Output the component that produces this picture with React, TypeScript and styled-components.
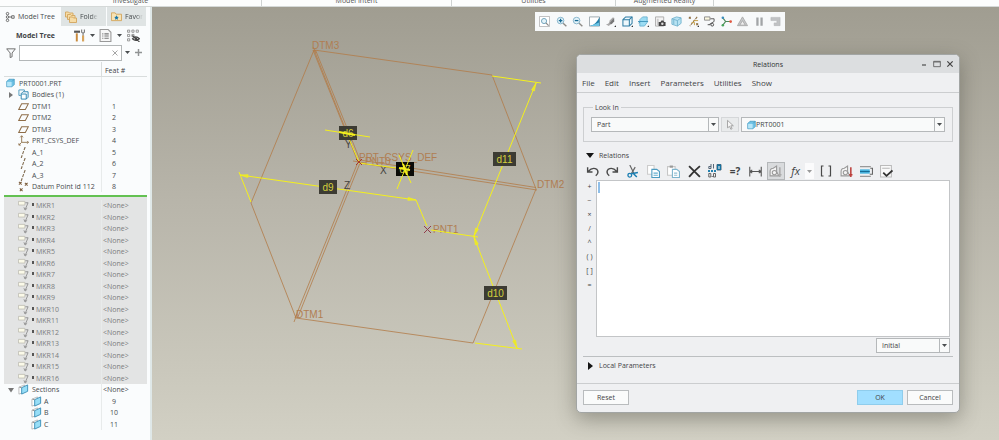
import React from "react";
import styled, { createGlobalStyle, css } from "styled-components";

const GlobalStyle = createGlobalStyle`
  * { box-sizing: border-box; }
  body { margin: 0; overflow: hidden; }
  body, button, select, input, textarea, table {
    font-family: "Open Sans", "Noto Sans", sans-serif;
    font-size: 7px;
    line-height: 11px;
    color: #3f4345;
  }
  button { padding: 0; margin: 0; border: 0; background: none; }
`;

/* ---------- shell ---------- */

const Page = styled.div`
  display: flex;
  flex-direction: column;
  height: 100vh;
  background: #fafcfd;
`;

const Ribbon = styled.header`
  display: grid;
  grid-template-columns: 262px 190px 164px 98px 1fr;
  height: 7px;
  flex: none;
  overflow: hidden;
  background: #fcfdfd;
  border-bottom: 1px solid #d5d9d8;
`;

const RibbonGroup = styled.div`
  display: flex;
  justify-content: center;
  align-items: flex-end;
  height: 6px;
  line-height: 10px;
  color: #555;
  border-right: 1px solid #cfd3d3;
  &:last-child { border-right: 0; }
`;

const Main = styled.main`
  display: flex;
  flex: 1;
  min-height: 0;
`;

const Svg = styled.svg`
  display: block;
  flex: none;
  fill: none;
`;

/* ---------- model tree ---------- */

const Sidebar = styled.aside`
  flex: none;
  width: 152px;
  padding-right: 4px;
  background: #fafcfd;
  border-right: 2px solid #dfe8e8;
`;

const Tabs = styled.div`
  display: flex;
  gap: 1px;
  height: 19px;
`;

const Tab = styled.button<{ $active?: boolean; $width: number }>`
  display: flex;
  align-items: center;
  gap: 3px;
  width: ${(p) => p.$width}px;
  padding-left: ${(p) => (p.$active ? 5 : 4)}px;
  overflow: hidden;
  white-space: nowrap;
  color: #454a4c;
  background: ${(p) => (p.$active ? "#fafcfd" : "#dfe4e4")};
`;

const TabText = styled.span<{ $faded?: boolean }>`
  ${(p) =>
    p.$faded &&
    css`
      mask-image: linear-gradient(90deg, #000 60%, transparent);
    `}
`;

const TreeBar = styled.div`
  display: flex;
  align-items: center;
  height: 18px;
  padding: 0 2px 0 16px;
`;

const TreeTitle = styled.h1`
  flex: 1;
  margin: 0;
  font-size: 7px;
  font-weight: 700;
`;

const BarButton = styled.button<{ $width: number }>`
  display: flex;
  justify-content: center;
  align-items: center;
  width: ${(p) => p.$width}px;
  height: 16px;
`;

const SearchRow = styled.div`
  display: flex;
  align-items: center;
  height: 17px;
  padding: 0 2px 0 6px;
`;

const SearchBox = styled.div`
  display: flex;
  align-items: center;
  flex: 1;
  height: 16px;
  margin-left: 3px;
  padding-right: 3px;
  background: #fff;
  border: 1px solid #b3b7b8;
`;

const SearchInput = styled.input`
  flex: 1;
  min-width: 0;
  border: 0;
  outline: 0;
  background: transparent;
`;

const Tree = styled.table`
  width: calc(100% - 3px);
  margin-left: 4px;
  margin-top: 1px;
  border-spacing: 0;
  table-layout: fixed;
`;

const Head = styled.th<{ $feat?: boolean }>`
  width: ${(p) => (p.$feat ? "46px" : "auto")};
  height: 15px;
  padding: 3px 0 0 3px;
  text-align: left;
  font-weight: 400;
  border-bottom: 1px solid #d9dddd;
  border-left: ${(p) => (p.$feat ? "1px solid #d9dddd" : "0")};
`;

const Row = styled.tr<{ $tall?: boolean; $muted?: boolean }>`
  height: ${(p) => (p.$tall ? 12 : 11)}px;
  color: ${(p) => (p.$muted ? "#7b7d7e" : "#474b4d")};
  background: ${(p) => (p.$muted ? "#e3e4e4" : "transparent")};
`;

const NameCell = styled.td`
  padding: 0;
`;

const NameLine = styled.div<{ $level: number }>`
  display: flex;
  align-items: center;
  height: 11px;
  white-space: nowrap;
  padding-left: ${(p) => [2, 14, 27][p.$level]}px;
`;

const IconSlot = styled.span<{ $wide?: boolean }>`
  display: flex;
  width: ${(p) => (p.$wide ? 14 : 13)}px;
`;

const Twisty = styled.button`
  width: 10px;
  margin-left: -10px;
`;

const Mark = styled.i`
  width: 2px;
  height: 3px;
  margin: 0 2px 2px 0;
  background: #555;
`;

const FeatCell = styled.td`
  padding: 0 0 0 1px;
  border-left: 1px solid #e8ebeb;
`;

const FeatNumber = styled.span`
  display: block;
  width: 22px;
  text-align: center;
`;

const InsertCell = styled.td`
  height: 8px;
  padding: 0;
  border-top: 3px solid #fafcfd;
  background: linear-gradient(#63c152 2px, #e3e4e4 2px);
`;

/* ---------- graphics area ---------- */

const Viewport = styled.section`
  position: relative;
  flex: 1;
  min-width: 0;
  overflow: hidden;
  background: linear-gradient(#a09d91, #b8b5aa 45%, #c9c7bb 82%, #d2d0c4);
`;

const ViewBar = styled.div`
  position: absolute;
  left: 383px;
  top: 5px;
  display: flex;
  justify-content: space-between;
  width: 250px;
  height: 19px;
  padding: 0 2px;
  background: #f7f9fa;
`;

const ViewButton = styled.button`
  display: flex;
  align-items: center;
  justify-content: center;
  width: 15px;
`;

/* ---------- dialog ---------- */

const Dialog = styled.div`
  position: absolute;
  left: 424px;
  right: 39px;
  top: 47px;
  background: #eff0f2;
  border: 1px solid #a2a5a4;
  border-radius: 5px;
  box-shadow: 0 6px 20px rgba(60, 60, 50, 0.4);
`;

const TitleBar = styled.div`
  display: grid;
  grid-template-columns: 1fr auto 1fr;
  align-items: center;
  height: 18px;
  padding: 0 3px;
  background: #dcdee0;
  border-radius: 4px 4px 0 0;
`;

const DialogTitle = styled.h2`
  grid-column: 2;
  margin: 0;
  font-size: 7px;
  font-weight: 400;
  color: #2f3233;
`;

const WindowButtons = styled.div`
  display: flex;
  justify-content: flex-end;
  gap: 3px;
`;

const WindowButton = styled.button`
  width: 10px;
`;

const MenuBar = styled.nav`
  display: flex;
  align-items: center;
  gap: 10px;
  height: 20px;
  padding-left: 5px;
  border-bottom: 1px solid #cbcdcf;
`;

const MenuItem = styled.button`
  font-size: 8px;
`;

const Body = styled.div`
  padding: 9px 6px 0;
`;

const Group = styled.fieldset`
  display: flex;
  gap: 2px;
  min-width: 0;
  margin: 0;
  padding: 4px 7px 9px;
  border: 1px solid #cdcfd1;
`;

const Legend = styled.legend`
  margin-left: 2px;
  padding: 0 2px;
`;

const SelectBox = styled.label<{ $width?: number }>`
  display: flex;
  align-items: center;
  flex: ${(p) => (p.$width ? "none" : 1)};
  width: ${(p) => (p.$width ? `${p.$width}px` : "auto")};
  height: 15px;
  padding-left: 5px;
  background: #f9fafa;
  border: 1px solid #b5b8ba;
`;

const Select = styled.select`
  appearance: none;
  flex: 1;
  min-width: 0;
  height: 13px;
  padding: 0;
  border: 0;
  outline: 0;
  background: transparent;
`;

const SelectArrow = styled.span`
  display: flex;
  align-items: center;
  justify-content: center;
  width: 10px;
  height: 13px;
  border-left: 1px solid #b5b8ba;
`;

const PickButton = styled.button`
  display: flex;
  align-items: center;
  justify-content: center;
  width: 18px;
  height: 15px;
  border: 1px solid #d5d7d9;
  background: #e9ebec;
`;

const SectionToggle = styled.button`
  display: flex;
  align-items: center;
  gap: 5px;
  height: 11px;
  padding-left: 3px;
`;

const RelationsHead = styled.div`
  padding-top: 8px;
`;

const EditBar = styled.div`
  display: flex;
  justify-content: space-between;
  height: 18px;
  margin: 1px 57px 0 0;
`;

const EditButton = styled.button<{ $on?: boolean; $wide?: boolean }>`
  display: flex;
  align-items: center;
  justify-content: ${(p) => (p.$wide ? "space-between" : "center")};
  width: ${(p) => (p.$wide ? 27 : 18)}px;
  height: 18px;
  padding-left: ${(p) => (p.$wide ? 4 : 0)}px;
  background: ${(p) => (p.$on ? "#d9dbdd" : "none")};
  border: ${(p) => (p.$on ? "1px solid #b4b7b9" : "0")};
`;

const DropPart = styled.span`
  display: flex;
  align-items: center;
  justify-content: center;
  width: 9px;
  height: 16px;
  background: #fbfbfc;
`;

const EditorRow = styled.div`
  display: flex;
  margin-right: 3px;
`;

const Operators = styled.div`
  display: flex;
  flex-direction: column;
  width: 13px;
`;

const Operator = styled.button`
  height: 14px;
  line-height: 12px;
  text-align: center;
  white-space: nowrap;
`;

const Editor = styled.div`
  position: relative;
  flex: 1;
  height: 157px;
  border: 1px solid #c3c5c7;
  background: #fff;
`;

const EditorText = styled.textarea`
  display: block;
  width: 100%;
  height: 100%;
  padding: 2px;
  border: 0;
  outline: 0;
  resize: none;
`;

const Caret = styled.span`
  position: absolute;
  left: 1px;
  top: 1px;
  width: 2px;
  height: 11px;
  background: #8fbfe9;
`;

const OrderRow = styled.div`
  display: flex;
  justify-content: flex-end;
  margin: 1px 3px 0 0;
  padding-bottom: 3px;
`;

const LocalSection = styled.div`
  height: 27px;
  padding-top: 3px;
  border-top: 1px solid #bcbfc1;
`;

const Footer = styled.footer`
  display: flex;
  gap: 4px;
  padding: 6px 6px 7px;
  border-top: 1px solid #cbcdcf;
`;

const PushButton = styled.button<{ $primary?: boolean }>`
  width: 46px;
  height: 15px;
  background: ${(p) => (p.$primary ? "#a1dfff" : "#fafbfb")};
  border: 1px solid ${(p) => (p.$primary ? "#8fcdec" : "#b9bcbe")};
  &:first-child { margin-right: auto; }
`;

/* ---------- icons ---------- */

const Ico = ({ w = 11, h = 11, box = 12, children }: { w?: number; h?: number; box?: number; children: React.ReactNode }) => (
  <Svg width={w} height={h} viewBox={`0 0 ${box} ${box}`} aria-hidden="true">{children}</Svg>
);

const Down = ({ color = "#4a4e50" }: { color?: string }) => (
  <Svg width="5" height="3" viewBox="0 0 5 3" aria-hidden="true"><path d="M0 0h5L2.500 3z" fill={color} /></Svg>
);

const PartIcon = () => (
  <Ico w={9} h={10}>
    <path d="M1 4l3-3h7v7l-3 3H1z" fill="#6fc3e6" stroke="#4397bf" strokeWidth="1" />
    <path d="M8 4l3-3" stroke="#4397bf" />
    <path d="M1.500 4.500h6v6h-6z" fill="#b6e6f8" />
  </Ico>
);
const BodiesIcon = () => (
  <Ico>
    <path d="M1 7V1h6v1.500M1 7h2" stroke="#4b98bd" />
    <path d="M3.500 5l2-2H11v6l-2 2H3.500z" fill="#fff" stroke="#2781ad" />
    <path d="M3.500 5.500H9V11" stroke="#2781ad" />
  </Ico>
);
const PlaneIcon = () => (
  <Ico><path d="M4 3h7.300L8 9.300H.8z" stroke="#8e6d48" strokeWidth="1.100" /></Ico>
);
const CsysIcon = () => (
  <Ico><path d="M4 1v7h7.500M4 8l-3 3M2.500 2.500L4 .8l1.500 1.700M10 6.500L11.500 8 10 9.500M1 9v2h2" stroke="#92744f" strokeWidth="1" /></Ico>
);
const AxisIcon = () => (
  <Ico><path d="M7.800 0L3.500 12" stroke="#806c50" strokeWidth="1.200" strokeDasharray="3.500 1.300" /></Ico>
);
const PointIcon = () => (
  <Ico><path d="M1 1l3 3M4 1L1 4M7.500 2l3 3M10.500 2l-3 3M2 8l3 3M5 8l-3 3" stroke="#806343" strokeWidth="1.100" /></Ico>
);
const MarkerIcon = () => (
  <Ico w={11}>
    <path d="M.5 1.500h7v4h-7z" fill="#fbfae9" stroke="#b9b8ae" strokeWidth=".8" />
    <path d="M8 3h3L8 10M6.500 8l1.200 3L10 9" stroke="#858585" strokeWidth=".9" />
  </Ico>
);
const SectionIcon = () => (
  <Ico>
    <path d="M1 3.500L7 1v8L1 11z" stroke="#aaa" strokeWidth=".8" fill="#fff" />
    <path d="M4 4l6.500-3v7L4 11z" fill="#97def7" stroke="#3a8fb8" />
    <path d="M4 4L1.500 3.500" stroke="#888" />
  </Ico>
);

/* ---------- tree data ---------- */

type Item = { name: string; feat?: string; level: number; icon: React.ReactNode; open?: boolean; muted?: boolean };

const topItems: Item[] = [
  { name: "PRT0001.PRT", level: 0, icon: <PartIcon /> },
  { name: "Bodies (1)", level: 1, icon: <BodiesIcon />, open: false },
  { name: "DTM1", feat: "1", level: 1, icon: <PlaneIcon /> },
  { name: "DTM2", feat: "2", level: 1, icon: <PlaneIcon /> },
  { name: "DTM3", feat: "3", level: 1, icon: <PlaneIcon /> },
  { name: "PRT_CSYS_DEF", feat: "4", level: 1, icon: <CsysIcon /> },
  { name: "A_1", feat: "5", level: 1, icon: <AxisIcon /> },
  { name: "A_2", feat: "6", level: 1, icon: <AxisIcon /> },
  { name: "A_3", feat: "7", level: 1, icon: <AxisIcon /> },
  { name: "Datum Point id 112", feat: "8", level: 1, icon: <PointIcon /> },
];

const lowerItems: Item[] = [
  ...Array.from({ length: 16 }, (_, i) => ({
    name: `MKR${i + 1}`, feat: "<None>", level: 1, icon: <MarkerIcon />, muted: true,
  })),
  { name: "Sections", feat: "<None>", level: 1, icon: <SectionIcon />, open: true },
  { name: "A", feat: "9", level: 2, icon: <SectionIcon /> },
  { name: "B", feat: "10", level: 2, icon: <SectionIcon /> },
  { name: "C", feat: "11", level: 2, icon: <SectionIcon /> },
];

const TreeRow = ({ item, tall }: { item: Item; tall: boolean }) => (
  <Row $tall={tall} $muted={item.muted}>
    <NameCell>
      <NameLine $level={item.level}>
        {item.open !== undefined && (
          <Twisty aria-label={`Toggle ${item.name}`}>
            <Svg width="6" height="6" viewBox="0 0 6 6">
              <path d={item.open ? "M0 1h6L3 5.500z" : "M1 0v6l4-3z"} fill="#777" />
            </Svg>
          </Twisty>
        )}
        <IconSlot $wide={item.level === 1}>{item.icon}</IconSlot>
        {item.muted && <Mark />}
        {item.name}
      </NameLine>
    </NameCell>
    <FeatCell>
      {item.feat && (item.feat.startsWith("<") ? item.feat : <FeatNumber>{item.feat}</FeatNumber>)}
    </FeatCell>
  </Row>
);

const ModelTree = () => (
  <Sidebar>
    <Tabs>
      <Tab $active $width={60}>
        <Ico w={10} h={12}>
          <g stroke="#555"><circle cx="3" cy="2" r="1.500" /><circle cx="3" cy="6" r="1.500" /><circle cx="3" cy="10" r="1.500" /><path d="M8 4.500h3v3H8zM4.500 6H8" /></g>
        </Ico>
        <TabText>Model Tree</TabText>
      </Tab>
      <Tab $width={45}>
        <Ico w={12} h={12}>
          <g fill="#f6dca6" stroke="#d2a55e" strokeWidth=".9"><path d="M.5 1h3l1 1H8v4H.5z" /><path d="M2.500 3.500h3l1 1H10v4H2.500z" /><path d="M4.500 6h3l1 1h3v4.500h-7z" /></g>
        </Ico>
        <TabText $faded>Folde</TabText>
      </Tab>
      <Tab $width={39}>
        <Ico w={11} h={11}>
          <path d="M.5 2h4l1 1.500h6v7H.5z" fill="#f8e3b4" stroke="#d2a55e" />
          <path d="M6 4.500l.8 1.700 1.700.3-1.200 1.200.3 1.800L6 8.600l-1.600.9.300-1.800L3.500 6.500l1.700-.3z" fill="#1776aa" />
        </Ico>
        <TabText $faded>Favor</TabText>
      </Tab>
    </Tabs>
    <TreeBar>
      <TreeTitle>Model Tree</TreeTitle>
      <BarButton $width={17} aria-label="Settings">
        <Ico w={13} h={13}>
          <path d="M1 1.500h5.500v2H1z" fill="#555" />
          <path d="M3.500 4v7.500" stroke="#c98a3c" strokeWidth="1.800" />
          <path d="M8 .5v2.500l1.200 1L10.500 3V.5M9.300 3.500v3" stroke="#777" />
          <path d="M9.300 6v5.500" stroke="#d8a45c" strokeWidth="2" />
        </Ico>
      </BarButton>
      <BarButton $width={8} aria-label="Settings options"><Down /></BarButton>
      <BarButton $width={19} aria-label="Show">
        <Ico w={13} h={13}>
          <path d="M1 .5h7.500L11 3v8.500H1z" fill="#f7f7f7" stroke="#999" />
          <path d="M3 4.500h1M3 6.500h1M3 8.500h1M5 4.500h4M5 6.500h4M5 8.500h4" stroke="#777" />
        </Ico>
      </BarButton>
      <BarButton $width={8} aria-label="Show options"><Down /></BarButton>
      <BarButton $width={21} aria-label="Tree columns">
        <Ico w={13} h={13}>
          <g stroke="#8b8b8b" strokeWidth=".8"><path d="M.5 1h2v2h-2zM.5 5h2v2h-2zM.5 9h2v2h-2zM4.500 1h2v2h-2zM8.500 1h2v2h-2zM4.500 5h2v2h-2z" /></g>
          <path d="M5 9q3-3.500 6.500 0-3.500 3-6.500 0zM5 6l6.500 6" stroke="#444" /><circle cx="8.300" cy="9" r="1.200" fill="#444" />
        </Ico>
      </BarButton>
    </TreeBar>
    <SearchRow>
      <Ico w={10} h={10}><path d="M.8 1h10.400L7.300 6v4.500L5 11.500V6z" stroke="#666" strokeWidth="1.100" /></Ico>
      <SearchBox>
        <SearchInput aria-label="Search model tree" />
        <Ico w={6} h={6}><path d="M1 1l10 10M11 1L1 11" stroke="#888" strokeWidth="1.500" /></Ico>
      </SearchBox>
      <BarButton $width={13} aria-label="Search options"><Down /></BarButton>
      <BarButton $width={13} aria-label="Add"><Ico w={7} h={7}><path d="M6 0v12M0 6h12" stroke="#909394" strokeWidth="2.500" /></Ico></BarButton>
    </SearchRow>
    <Tree>
      <thead><tr><Head /><Head $feat>Feat #</Head></tr></thead>
      <tbody>
        {topItems.map((it, i) => <TreeRow key={it.name} item={it} tall={i % 2 === 0} />)}
        <tr><InsertCell colSpan={2} /></tr>
        {lowerItems.map((it, i) => <TreeRow key={it.name} item={it} tall={i % 2 === 1} />)}
      </tbody>
    </Tree>
  </Sidebar>
);

/* ---------- model drawing ---------- */

const Drawing = styled(Svg)`
  font-family: "Liberation Sans", sans-serif;
  font-size: 10px;
`;

const Arrow = ({ x, y, a }: { x: number; y: number; a: number }) => (
  <path d="M0 0L-8 -1.500V1.500z" transform={`translate(${x} ${y}) rotate(${a})`} fill="#e9e62a" stroke="#f4f01c" strokeWidth=".6" />
);

const DimTag = ({ x, y, w, text, dark }: { x: number; y: number; w: number; text: string; dark?: boolean }) => (
  <g>
    <rect x={x} y={y} width={w} height="14" fill={dark ? "#0b0b08" : "#3c3b33"} />
    <text x={x + w / 2} y={y + 11} textAnchor="middle" fill="#d3cf3e">{text}</text>
  </g>
);

const Model = () => (
  <Drawing width="847" height="433" viewBox="152 7 847 433" aria-label="Datum planes">
    <g stroke="#b27b48" strokeWidth=".8">
      <path d="M314 50L492 75L536 189L473 343L296 318L251 203z" />
      <path d="M313 50L358 162L295 318M315.500 50L360 160L536 187.500M314 50L359 163L537 190M297.500 318L360 163M294 322L297 314M313 47L316 53M353 161L366 163" />
    </g>
    <g fill="#b07e52">
      <text x="312" y="49">DTM3</text>
      <text x="537" y="188">DTM2</text>
      <text x="296" y="318">DTM1</text>
      <text x="359" y="161">PRT_CSYS_DEF</text>
      <text x="365" y="165">PNT0</text>
      <text x="433" y="233">PNT1</text>
    </g>
    <g fill="#45443e">
      <text x="345" y="148">Y</text>
      <text x="380" y="174">X</text>
      <text x="344" y="189">Z</text>
    </g>
    <path d="M424 226l7 7M431 226l-7 7" stroke="#923b4a" />
    <g stroke="#f4f01c" strokeWidth="1">
      <path d="M492 76L541 83M536 83L474 236M431 230L478 237M474 237L517 348M475 343L522 349" />
      <path d="M239 172L251 202M240 175L416 200L427 226" />
      <path d="M359 162L347 134M359 163L404 169" />
    </g>
    <Arrow x={240} y={175} a={188} />
    <Arrow x={416} y={200} a={8} />
    <Arrow x={536} y={83} a={-68} />
    <Arrow x={474} y={236} a={112} />
    <Arrow x={474} y={237} a={249} />
    <Arrow x={517} y={348} a={69} />
    <path d="M356 159l6 6M362 159l-6 6" stroke="#a93a2b" />
    <DimTag x={339} y={126} w={18} text="d6" />
    <DimTag x={396} y={162} w={18} text="d7" dark />
    <DimTag x={319} y={180} w={18} text="d9" />
    <DimTag x={493} y={152} w={23} text="d11" />
    <DimTag x={484} y={286} w={23} text="d10" />
    <path d="M325 130L370 137M413 150L397 189M399 155L411 183" stroke="#f4f01c" strokeWidth="1" />
    <path d="M339 132l16 3M399 168l11 2M403 164l4 11" stroke="#f4f01c" strokeWidth="2" />
  </Drawing>
);

const Lens = () => (<><circle cx="5" cy="5" r="3.600" fill="#e5f4fa" stroke="#7fb0c8" /><path d="M7.800 7.800l3.500 3.500" stroke="#8d8b86" strokeWidth="1.500" /></>);
const Flyout = () => <path d="M12 10v2h-2z" fill="#333" />;

const viewTools: [string, React.ReactNode][] = [
  ["Refit", <><path d="M.5.5h11v11H.5z" stroke="#aaa" strokeWidth=".8" fill="#fff" /><circle cx="5.500" cy="5.500" r="2.800" fill="#e5f4fa" stroke="#6a9fb8" /><path d="M7.500 7.500l3 3" stroke="#888" strokeWidth="1.300" /></>],
  ["Zoom in", <><Lens /><path d="M5 3v4M3 5h4" stroke="#176b95" strokeWidth="1.400" /></>],
  ["Zoom out", <><Lens /><path d="M3 5h4" stroke="#176b95" strokeWidth="1.400" /></>],
  ["Repaint", <><path d="M.5 1h11v10H.5z" fill="#fff" stroke="#98a4aa" /><path d="M11.500 1v10H1q7-2 10.500-10z" fill="#2580ab" /><path d="M1 11h10V7z" fill="#6cc3e3" /></>],
  ["Rendering", <><path d="M1 9q4 0 4-4l4-4 1 4-2 3-4 3z" fill="#aaa" /><path d="M5 8l5-6v4L7 9z" fill="#777" /><Flyout /></>],
  ["Display style", <><path d="M1 4l3-3h7v7l-3 3H1z" fill="#eef8fc" stroke="#2d7ba3" strokeWidth="1.100" /><path d="M1 4h7v7M8 4l3-3" stroke="#2d7ba3" strokeWidth="1.100" /><Flyout /></>],
  ["Saved orientations", <><path d="M2 4l3-3h5v6l-3 4H2z" fill="#9bdcf3" stroke="#6fb5d2" /><path d="M0 6h11M2 6l-1 2" stroke="#3e94ba" /><Flyout /></>],
  ["View manager", <><path d="M.5 1h9v10h-9z" fill="#f3f3f3" stroke="#aaa" /><path d="M2 3h2v7H2z" fill="#ccc" /><path d="M4 6.500h2l1-1.500h2l1 1.500h1.500V11H4z" fill="#444" /><circle cx="8" cy="8.500" r="1.300" fill="#ddd" /></>],
  ["Perspective", <><path d="M1 3l5-2 5 1v6l-4 3-6-2z" fill="#b8e3f3" stroke="#74b3ce" /><path d="M1 3l6 2v6M7 5l4-3M3 4v5" stroke="#74b3ce" /></>],
  ["Datum display", <><path d="M1 1l2 2M3 1L1 3M10 1L2 11M9 8l2 2M11 8L9 10" stroke="#8b6b3e" strokeWidth="1.100" strokeDasharray="3 1" /><path d="M4 7h3v3M6 5h5" stroke="#c39a3c" /><Flyout /></>],
  ["Annotations", <><path d="M.5 1h6v3.500h-6z" fill="#fbf8df" stroke="#888" /><path d="M7 3h4v3L6 9" stroke="#555" /><circle cx="9" cy="9.500" r="1.500" stroke="#444" /><path d="M4 9.500h3" stroke="#444" /></>],
  ["Spin center", <><path d="M2 2l3 4-3 4M5 6h5" stroke="#4f8a5b" strokeWidth="1.300" /><circle cx="2" cy="2" r="1.400" fill="#3b8dbd" /><circle cx="2" cy="10" r="1.400" fill="#49a35b" /><circle cx="10.500" cy="6" r="1.500" fill="#e0563f" /></>],
  ["Simulation", <><path d="M6 1l5.500 9.500H.5z" fill="#c7c9ca" stroke="#aaa" /><path d="M6 5l3 5H3z" fill="#eee" stroke="#aaa" /></>],
  ["Pause", <path d="M2.500 1.500h2.500v9H2.500zM7 1.500h2.500v9H7z" fill="#a2a5a7" />],
  ["Resume", <path d="M1 1.500h10v9H4.500V7.500h3V5H1z" fill="#c0c2c4" stroke="#b2b4b6" strokeWidth=".6" />],
];

/* ---------- relations dialog ---------- */

const editLeft: [string, React.ReactNode][] = [
  ["Undo", <path d="M1.500 2v4.500H6M2 6q4-4.500 8-2 2.500 3-1 6" stroke="#4a4a4a" strokeWidth="1.300" />],
  ["Redo", <path d="M10.500 2v4.500H6M10 6Q6 1.500 2 4q-2.500 3 1 6" stroke="#4a4a4a" strokeWidth="1.300" />],
  ["Cut", <><path d="M3.500 0l4 8M8.500 2L5 8" stroke="#666" strokeWidth="1.100" /><circle cx="3.500" cy="9.500" r="1.700" stroke="#1c7fb2" strokeWidth="1.200" /><path d="M5 8l6-1M7 8l3 3" stroke="#1c7fb2" strokeWidth="1.400" /></>],
  ["Copy", <><path d="M.5.5h6v8h-6z" fill="#fff" stroke="#ccc" /><path d="M4.500 4h4.500l2.500 2v5.500h-7z" fill="#fff" stroke="#4c9bc0" /><path d="M6 7.500h4M6 9.500h4" stroke="#66afd0" /></>],
  ["Paste", <><path d="M.5 1.500h7v8h-7z" fill="#fff" stroke="#c6c6c6" /><path d="M2.500.5h3v2h-3z" fill="#999" /><path d="M5 4h4l2.500 2v5.500H5z" fill="#fff" stroke="#7fb5cd" /><path d="M6.500 7.500h3M6.500 9.500h3" stroke="#91bfd3" /></>],
  ["Delete", <path d="M1 1l10 10M11 1Q5 6 1 11" stroke="#333" strokeWidth="1.700" />],
];

const Dims = () => (
  <Svg width="14" height="14" viewBox="0 0 14 14" aria-hidden="true">
    <path d="M3 0v4.500H.8V2.500H3M5.500 0v4.500M9 .5h4V6H9z" stroke="#567" />
    <path d="M9 .5h4V6H9z" fill="#14729f" /><path d="M11 2v3" stroke="#fff" />
    <path d="M0 7h8" stroke="#2382b0" strokeWidth="2" strokeDasharray="2 1" />
    <path d="M.8 9.500h2V13h-2zM5.500 9.500h2V13h-2z" stroke="#666" /><path d="M3.700 12.500h1" stroke="#555" />
  </Svg>
);

const Sketch = ({ accent = "#aaa" }: { accent?: string }) => (
  <>
    <path d="M1 10V6q0-3 3-3l3-2v5l2 4z" fill="#f4f4f4" stroke="#999" />
    <circle cx="5" cy="7" r="2" stroke="#999" /><path d="M10 2v9M8.500 9h3" stroke={accent} strokeWidth="1.400" />
  </>
);

const TextGlyph = styled.span<{ $italic?: boolean }>`
  font-size: ${(p) => (p.$italic ? 11 : 10)}px;
  font-style: ${(p) => (p.$italic ? "italic" : "normal")};
  font-weight: ${(p) => (p.$italic ? 400 : 700)};
  line-height: 14px;
  white-space: nowrap;
`;

const Relations = () => (
  <Dialog role="dialog" aria-labelledby="relations-title">
    <TitleBar>
      <DialogTitle id="relations-title">Relations</DialogTitle>
      <WindowButtons>
        <WindowButton aria-label="Minimize"><Ico w={8} h={8}><path d="M3 7.500h6" stroke="#444" strokeWidth="1.700" /></Ico></WindowButton>
        <WindowButton aria-label="Maximize"><Ico w={8} h={8}><path d="M1 2h10v8H1zM1 3h10" stroke="#555" strokeWidth="1.200" /></Ico></WindowButton>
        <WindowButton aria-label="Close"><Ico w={8} h={8}><path d="M2 2l8 8M10 2l-8 8" stroke="#444" strokeWidth="1.800" /></Ico></WindowButton>
      </WindowButtons>
    </TitleBar>
    <MenuBar>
      {["File", "Edit", "Insert", "Parameters", "Utilities", "Show"].map((m) => <MenuItem key={m}>{m}</MenuItem>)}
    </MenuBar>
    <Body>
      <Group>
        <Legend>Look In</Legend>
        <SelectBox $width={128}>
          <Select aria-label="Object type"><option>Part</option></Select>
          <SelectArrow><Down /></SelectArrow>
        </SelectBox>
        <PickButton aria-label="Pick object">
          <Ico w={10} h={11}><path d="M3 1l7 6.500H7l1.500 3.500-1.500.7L5.500 8.200 3 10z" fill="#f6f6f6" stroke="#999" /></Ico>
        </PickButton>
        <SelectBox>
          <PartIcon />
          <Select aria-label="Object"><option>PRT0001</option></Select>
          <SelectArrow><Down /></SelectArrow>
        </SelectBox>
      </Group>
      <RelationsHead>
        <SectionToggle aria-expanded="true">
          <Svg width="8" height="5" viewBox="0 0 8 5"><path d="M0 0h8L4 5z" fill="#151515" /></Svg>
          Relations
        </SectionToggle>
      </RelationsHead>
      <EditBar>
        {editLeft.map(([label, icon]) => (
          <EditButton key={label} aria-label={label}><Ico w={13} h={13}>{icon}</Ico></EditButton>
        ))}
        <EditButton aria-label="Switch dimensions"><Dims /></EditButton>
        <EditButton aria-label="Evaluate"><TextGlyph>=?</TextGlyph></EditButton>
        <EditButton aria-label="Measure"><Ico w={13} h={13}><path d="M.7 1.500v9M11.300 1.500v9M1 6h10M3 4.500L1 6l2 1.500M9 4.500L11 6 9 7.500" stroke="#555" /></Ico></EditButton>
        <EditButton $on aria-label="Units"><Ico w={13} h={13}><Sketch /></Ico></EditButton>
        <EditButton $wide aria-label="Insert function">
          <TextGlyph $italic>fx</TextGlyph>
          <DropPart><Down color="#999" /></DropPart>
        </EditButton>
        <EditButton aria-label="Insert parameter"><Ico w={12} h={12}><path d="M3.500 1H1.500v10h2M8.500 1h2v10h-2" stroke="#4a4a4a" strokeWidth="1.200" /></Ico></EditButton>
        <EditButton aria-label="Unit sensitive"><Ico w={13} h={13}><Sketch accent="#bc3e3a" /></Ico></EditButton>
        <EditButton aria-label="Sort relations"><Ico w={13} h={13}><path d="M0 1.500h10M0 10.500h10" stroke="#999" strokeWidth="1.200" /><path d="M0 4h9v4H0z" fill="#49b5df" /><path d="M0 6h9" stroke="#176d97" /><path d="M9.500 3h2v5.500H9" stroke="#666" /></Ico></EditButton>
        <EditButton aria-label="Verify relations"><Ico w={13} h={13}><path d="M.5.5h10v10.500H.5z" fill="#fafafa" stroke="#bbb" /><path d="M2 3h7" stroke="#bbb" /><path d="M3 7l3 3 5.500-5" stroke="#333" strokeWidth="1.700" /></Ico></EditButton>
      </EditBar>
      <EditorRow>
        <Operators>
          {["+", "−", "×", "/", "^", "( )", "[ ]", "="].map((o) => <Operator key={o}>{o}</Operator>)}
        </Operators>
        <Editor>
          <EditorText aria-label="Relations text" />
          <Caret />
        </Editor>
      </EditorRow>
      <OrderRow>
        <SelectBox $width={74}>
          <Select aria-label="Execution order"><option>Initial</option></Select>
          <SelectArrow><Down /></SelectArrow>
        </SelectBox>
      </OrderRow>
      <LocalSection>
        <SectionToggle aria-expanded="false">
          <Svg width="8" height="8" viewBox="0 0 8 8"><path d="M2 0v8l5-4z" fill="#151515" /></Svg>
          Local Parameters
        </SectionToggle>
      </LocalSection>
    </Body>
    <Footer>
      <PushButton>Reset</PushButton>
      <PushButton $primary>OK</PushButton>
      <PushButton>Cancel</PushButton>
    </Footer>
  </Dialog>
);

export default function App() {
  return (
    <Page>
      <GlobalStyle />
      <Ribbon>
        {["Investigate", "Model Intent", "Utilities", "Augmented Reality", ""].map((g) => (
          <RibbonGroup key={g}>{g}</RibbonGroup>
        ))}
      </Ribbon>
      <Main>
        <ModelTree />
        <Viewport>
          <Model />
          <ViewBar>
            {viewTools.map(([label, icon]) => (
              <ViewButton key={label} aria-label={label}><Ico w={11} h={11}>{icon}</Ico></ViewButton>
            ))}
          </ViewBar>
          <Relations />
        </Viewport>
      </Main>
    </Page>
  );
}
